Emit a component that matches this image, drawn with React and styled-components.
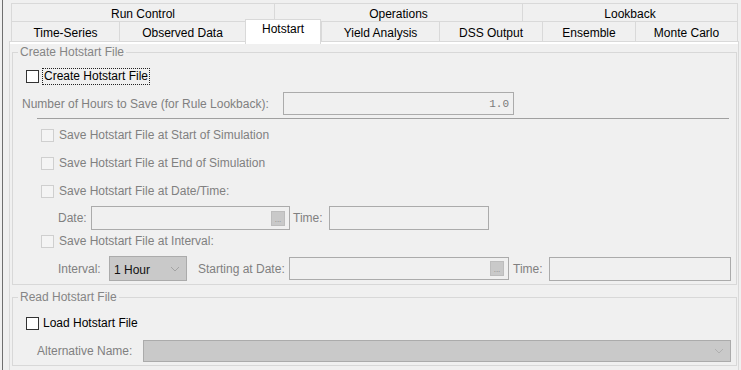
import React from "react";
import styled, { createGlobalStyle } from "styled-components";

const GlobalStyle = createGlobalStyle`
  html, body {
    margin: 0;
    padding: 0;
    background: #f0f0f0;
  }
  body {
    font-family: "Liberation Sans", Arial, sans-serif;
    font-size: 12px;
    color: #000;
  }
`;

const topTabs = [
  { label: "Run Control", w: 263 },
  { label: "Operations", w: 248 },
  { label: "Lookback", w: 216 },
];

const bottomTabs = [
  { label: "Time-Series", w: 108 },
  { label: "Observed Data", w: 126 },
  { label: "Hotstart", w: 76, active: true },
  { label: "Yield Analysis", w: 118 },
  { label: "DSS Output", w: 103 },
  { label: "Ensemble", w: 93 },
  { label: "Monte Carlo", w: 103 },
];

const Chevron = ({ color = "#a3a3a3" }) => (
  <svg width="10" height="6" viewBox="0 0 10 6">
    <polyline points="1,1 5,5 9,1" fill="none" stroke={color} strokeWidth="1" />
  </svg>
);

const CheckBox = ({ disabled }) => <Box $disabled={disabled} />;

const DateField = ({ width, height }) => (
  <Field $w={width} $h={height} $end>
    <DotsButton>...</DotsButton>
  </Field>
);

const App = () => {
  return (
    <Window>
      <GlobalStyle />
      <Frame>
        <TabStrip>
          <TabRow $cols={topTabs.map((t) => t.w + "px").join(" ")} $h={18}>
            {topTabs.map((t) => (
              <Tab key={t.label} $top={3}>
                {t.label}
              </Tab>
            ))}
          </TabRow>
          <TabRow $cols={bottomTabs.map((t) => t.w + "px").join(" ")} $h={20}>
            {bottomTabs.map((t) =>
              t.active ? (
                <ActiveTab key={t.label}>{t.label}</ActiveTab>
              ) : (
                <Tab key={t.label} $top={4}>
                  {t.label}
                </Tab>
              )
            )}
          </TabRow>
        </TabStrip>

        <Panel>
          <Group>
            <Legend>Create Hotstart File</Legend>

            <CheckRow $indent={13} $top={8}>
              <CheckBox />
              <FocusLabel>Create Hotstart File</FocusLabel>
            </CheckRow>

            <FieldRow $indent={9} $top={7} $h={23}>
              <Label $w={261}>Number of Hours to Save (for Rule Lookback):</Label>
              <Field $w={231} $h={23} $end>
                <Mono>1.0</Mono>
              </Field>
            </FieldRow>

            <Separator />

            <CheckRow $indent={28} $top={7}>
              <CheckBox disabled />
              <CheckLabel>Save Hotstart File at Start of Simulation</CheckLabel>
            </CheckRow>
            <CheckRow $indent={28} $top={10}>
              <CheckBox disabled />
              <CheckLabel>Save Hotstart File at End of Simulation</CheckLabel>
            </CheckRow>
            <CheckRow $indent={28} $top={10}>
              <CheckBox disabled />
              <CheckLabel>Save Hotstart File at Date/Time:</CheckLabel>
            </CheckRow>

            <FieldRow $indent={45} $top={6} $h={24}>
              <Label $w={33}>Date:</Label>
              <DateField width={199} height={24} />
              <Label $w={36} $gap={3}>
                Time:
              </Label>
              <Field $w={160} $h={24} />
            </FieldRow>

            <CheckRow $indent={28} $top={2}>
              <CheckBox disabled />
              <CheckLabel>Save Hotstart File at Interval:</CheckLabel>
            </CheckRow>

            <FieldRow $indent={45} $top={6} $h={25}>
              <Label $w={51}>Interval:</Label>
              <Dropdown $w={78}>
                <DropText>1 Hour</DropText>
                <Chevron />
              </Dropdown>
              <Label $w={91} $gap={11}>
                Starting at Date:
              </Label>
              <DateField width={220} height={23} />
              <Label $w={36} $gap={4}>
                Time:
              </Label>
              <Field $w={182} $h={24} />
            </FieldRow>
          </Group>

          <Group $top={5}>
            <Legend>Read Hotstart File</Legend>

            <CheckRow $indent={13} $top={10}>
              <CheckBox />
              <CheckLabel $enabled>Load Hotstart File</CheckLabel>
            </CheckRow>

            <FieldRow $indent={24} $top={8} $h={22}>
              <Label $w={106}>Alternative Name:</Label>
              <Dropdown $w={588} $h={22}>
                <DropText />
                <Chevron color="#b0b0b0" />
              </Dropdown>
            </FieldRow>
          </Group>
        </Panel>
      </Frame>
    </Window>
  );
};

export default App;

const Window = styled.div`
  width: 741px;
  height: 370px;
  overflow: hidden;
  background: #f0f0f0;
  padding-left: 2px;
  box-sizing: border-box;
`;

const Frame = styled.div`
  height: 100%;
  border-left: 1px solid #6f6f6f;
  padding: 3px 2px 0 6px;
  box-sizing: border-box;
`;

const TabStrip = styled.div`
  margin: 0 1px 0 2px;
`;

const TabRow = styled.div`
  display: grid;
  grid-template-columns: ${(p) => p.$cols};
  grid-auto-rows: ${(p) => p.$h}px;
`;

const Tab = styled.div`
  border-top: 1px solid #d9d9d9;
  border-left: 1px solid #d9d9d9;
  padding-top: ${(p) => p.$top}px;
  line-height: 14px;
  text-align: center;
  white-space: nowrap;
  box-sizing: border-box;

  &:last-child {
    border-right: 1px solid #d9d9d9;
  }
`;

const ActiveTab = styled.div`
  position: relative;
  z-index: 1;
  margin: -2px 0 -3px;
  background: #fff;
  border: 1px solid #d9d9d9;
  border-bottom: none;
  padding-top: 2px;
  line-height: 14px;
  text-align: center;
  box-sizing: border-box;
`;

const Panel = styled.div`
  height: 340px;
  border: 1px solid #d9d9d9;
  box-shadow: inset 0 2px 0 #fff;
  padding-top: 3px;
  box-sizing: border-box;
`;

const Group = styled.fieldset`
  margin: ${(p) => p.$top || 0}px 1px 0 2px;
  padding: 0 0 3px 0;
  border: 1px solid #d8d8d8;
  min-inline-size: 0;
`;

const Legend = styled.legend`
  margin-left: 5px;
  padding: 0 2px;
  line-height: 14px;
  color: #858585;
`;

const CheckRow = styled.div`
  display: flex;
  align-items: center;
  height: 18px;
  margin-top: ${(p) => p.$top}px;
  padding-left: ${(p) => p.$indent}px;
`;

const FieldRow = styled.div`
  display: flex;
  align-items: center;
  height: ${(p) => p.$h}px;
  margin-top: ${(p) => p.$top}px;
  padding-left: ${(p) => p.$indent}px;
`;

const Box = styled.span`
  width: 13px;
  height: 13px;
  flex: none;
  box-sizing: border-box;
  border: 1px solid ${(p) => (p.$disabled ? "#cfcfcf" : "#333")};
  background: ${(p) => (p.$disabled ? "#f4f4f4" : "#fff")};
`;

const FocusLabel = styled.span`
  margin-left: 4px;
  padding: 0 1px;
  line-height: 15px;
  outline: 1px dotted #222;
  outline-offset: 0;
  color: #000;
`;

const CheckLabel = styled.span`
  margin-left: ${(p) => (p.$enabled ? 4 : 5)}px;
  line-height: 14px;
  color: ${(p) => (p.$enabled ? "#000" : "#808080")};
  white-space: nowrap;
`;

const Label = styled.span`
  width: ${(p) => p.$w}px;
  margin-left: ${(p) => p.$gap || 0}px;
  flex: none;
  color: #808080;
  white-space: nowrap;
`;

const Field = styled.div`
  width: ${(p) => p.$w}px;
  height: ${(p) => p.$h}px;
  flex: none;
  box-sizing: border-box;
  border: 1px solid #ababab;
  background: #f0f0f0;
  display: flex;
  align-items: center;
  justify-content: ${(p) => (p.$end ? "flex-end" : "flex-start")};
  padding-right: 4px;
`;

const Mono = styled.span`
  font-family: "Liberation Mono", "DejaVu Sans Mono", monospace;
  font-size: 11px;
  color: #7a7a7a;
  margin-top: 1px;
`;

const DotsButton = styled.span`
  width: 14px;
  height: 15px;
  box-sizing: border-box;
  background: #c9c9c9;
  border: 1px solid #bdbdbd;
  color: #8a8a8a;
  font-size: 8px;
  line-height: 8px;
  display: flex;
  align-items: flex-end;
  justify-content: center;
  padding-bottom: 1px;
  letter-spacing: 0;
`;

const Dropdown = styled.div`
  width: ${(p) => p.$w}px;
  height: ${(p) => p.$h || 25}px;
  flex: none;
  box-sizing: border-box;
  border: 1px solid #ababab;
  background: #c9c9c9;
  display: flex;
  align-items: center;
  padding: 0 6px 0 4px;
`;

const DropText = styled.span`
  flex: 1;
  color: #111;
  margin-top: 2px;
`;

const Separator = styled.div`
  height: 1px;
  margin: 3px 7px 0 24px;
  background: #a0a0a0;
`;
